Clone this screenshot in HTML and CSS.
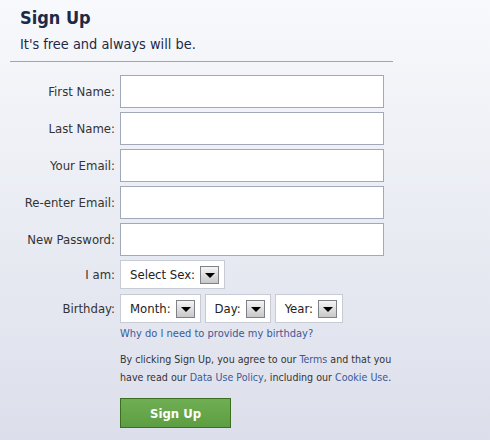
FILE: index.html
```html
<!DOCTYPE html>
<html lang="en">
<head>
    <meta charset="UTF-8">
    <title>Sign Up</title>
    <link rel="stylesheet" href="styles.css">
</head>
<body>
<div class="signup">
    <div class="head">
        <h1>Sign Up</h1>
        <p>It's free and always will be.</p>
    </div>
    <div class="rule"></div>
    <form class="form">
        <label>First Name:</label>
        <input type="text">
        <label>Last Name:</label>
        <input type="text">
        <label>Your Email:</label>
        <input type="text">
        <label>Re-enter Email:</label>
        <input type="text">
        <label>New Password:</label>
        <input type="password">
        <label class="short">I am:</label>
        <div class="sels">
            <span class="sel">Select Sex: <i class="arrow"></i></span>
        </div>
        <label class="short bday">Birthday:</label>
        <div class="sels bday">
            <span class="sel">Month: <i class="arrow"></i></span>
            <span class="sel">Day: <i class="arrow"></i></span>
            <span class="sel">Year: <i class="arrow"></i></span>
        </div>
        <span></span>
        <div class="more">
            <a href="#" class="why">Why do I need to provide my birthday?</a>
            <p class="terms">By clicking Sign Up, you agree to our <a href="#">Terms</a> and that you<br>have read our <a href="#">Data Use Policy</a>, including our <a href="#">Cookie Use</a>.</p>
            <button type="button" class="btn">Sign Up</button>
        </div>
    </form>
</div>
</body>
</html>
```

FILE: styles.css
```css
* {
    margin: 0;
    padding: 0;
    box-sizing: border-box;
}

html, body {
    height: 100%;
}

body {
    background: linear-gradient(#f8f9fc, #dcdfeb);
    font-family: Tahoma, "DejaVu Sans Condensed", "DejaVu Sans", sans-serif;
    color: #333;
}

.signup {
    padding-top: 8px;
}

.head {
    padding-left: 20px;
    color: #1c2a47;
}

.head h1 {
    font-size: 18px;
    line-height: 20px;
    font-weight: bold;
    color: #1c2a47;
}

.head p {
    margin-top: 7px;
    font-size: 14.4px;
    line-height: 18px;
    color: #1c2a47;
}

.rule {
    margin: 8px 0 0 10px;
    width: 383px;
    height: 1px;
    background: #9aa4bd;
}

.form {
    margin-top: 13px;
    display: grid;
    grid-template-columns: 115px 264px;
    column-gap: 5px;
    row-gap: 4px;
    align-items: center;
}

.form label {
    text-align: right;
    font-size: 13px;
    color: #333;
}

.form input {
    height: 33px;
    border: 1px solid #a0a8ba;
    background: #fff;
}

.sels {
    display: flex;
    gap: 4px;
}

.sels.bday,
label.bday {
    margin-top: 1px;
}

.sel {
    display: flex;
    align-items: center;
    gap: 5px;
    height: 29px;
    padding: 0 5px 0 9px;
    background: #fff;
    border: 1px solid #c6cbd6;
    font-size: 13px;
    color: #222;
}

.arrow {
    display: inline-block;
    width: 19px;
    height: 18px;
    border: 1px solid #7e8288;
    background: linear-gradient(#f4f4f4, #c8c8c8);
    position: relative;
}

.arrow::after {
    content: '';
    position: absolute;
    left: 4px;
    top: 6px;
    border-left: 5px solid transparent;
    border-right: 5px solid transparent;
    border-top: 5px solid #000;
}

.more a {
    color: #3b5998;
    text-decoration: none;
}

.why {
    display: block;
    font-size: 11px;
    line-height: 14px;
}

.terms {
    margin-top: 9px;
    font-size: 10.6px;
    line-height: 18px;
    color: #333;
    white-space: nowrap;
}

.btn {
    margin-top: 12px;
    width: 111px;
    height: 30px;
    border: 1px solid #3b6e22;
    background: linear-gradient(#6fae53, #5e9e43);
    color: #fff;
    font-family: Tahoma, "DejaVu Sans Condensed", "DejaVu Sans", sans-serif;
    font-size: 13px;
    font-weight: bold;
}
```
